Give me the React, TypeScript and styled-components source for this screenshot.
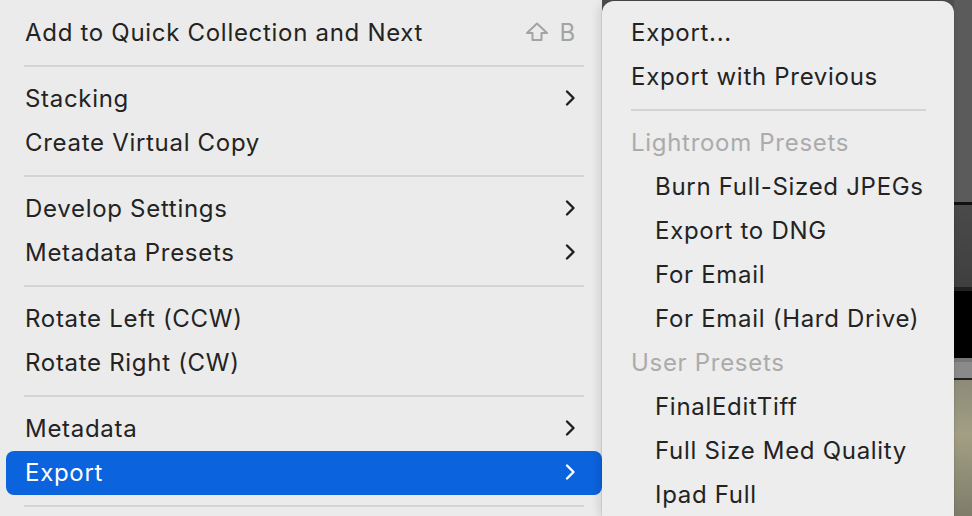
import React from 'react';
import styled, { createGlobalStyle } from 'styled-components';

const Global = createGlobalStyle`
  html, body {
    margin: 0;
    padding: 0;
    width: 972px;
    height: 516px;
    overflow: hidden;
    background: #4f4f4f;
  }
  body {
    font-family: Inter, "Noto Sans", "Liberation Sans", sans-serif;
    -webkit-font-smoothing: antialiased;
  }
`;

const Page = styled.div`
  display: flex;
  width: 972px;
  height: 516px;
  overflow: hidden;
`;

const MainMenu = styled.div`
  width: 602px;
  flex: none;
  background: #ebebeb;
  padding: 11px 0 0 6px;
  box-sizing: border-box;
  display: flex;
  flex-direction: column;
`;

const SubMenu = styled.div`
  width: 352px;
  flex: none;
  background: #ededed;
  border-radius: 12px 12px 0 0;
  margin-top: 1px;
  padding: 10px 0 0 0;
  box-sizing: border-box;
  display: flex;
  flex-direction: column;
  position: relative;
  z-index: 1;
  box-shadow: -3px 0 10px rgba(0, 0, 0, 0.12), 0 0 0 0.5px rgba(0, 0, 0, 0.12);
`;

const Row = styled.div<{ $active?: boolean; $indent?: number }>`
  height: 44px;
  flex: none;
  display: flex;
  align-items: center;
  box-sizing: border-box;
  padding: 0 26px 2px ${(p) => 19 + (p.$indent || 0)}px;
  border-radius: 8px;
  font-size: 24px;
  letter-spacing: 0.7px;
  color: ${(p) => (p.$active ? '#ffffff' : '#232323')};
  background: ${(p) => (p.$active ? '#0b63de' : 'transparent')};
  white-space: nowrap;
`;

const SubRow = styled(Row)`
  padding-left: ${(p) => 29 + (p.$indent || 0)}px;
`;

const Header = styled(SubRow)`
  color: #ababab;
`;

const Label = styled.span`
  flex: 1;
`;

const Shortcut = styled.span`
  display: flex;
  align-items: center;
  gap: 11px;
  color: #a3a3a3;
  font-size: 24px;
  margin-right: 0;
`;

const Separator = styled.div<{ $left: number; $right: number }>`
  height: 22px;
  flex: none;
  display: flex;
  align-items: center;
  padding: 0 ${(p) => p.$right}px 0 ${(p) => p.$left}px;
  &::after {
    content: '';
    flex: 1;
    height: 2px;
    background: #d4d4d4;
  }
`;

const Backdrop = styled.div`
  flex: 1;
  display: flex;
  flex-direction: column;
`;

const Band = styled.div<{ $h: number; $bg: string }>`
  height: ${(p) => p.$h}px;
  flex: none;
  background: ${(p) => p.$bg};
`;

const Photo = styled.div`
  flex: 1;
  background: linear-gradient(180deg, #8d8a78 0%, #a29f84 40%, #7f7c6a 100%);
`;

function Chevron({ color }: { color: string }) {
  return (
    <svg width="12" height="18" viewBox="0 0 12 18">
      <path d="M3 2.5 L9.5 9 L3 15.5" fill="none" stroke={color} strokeWidth="2.4" strokeLinecap="round" strokeLinejoin="round" />
    </svg>
  );
}

function ShiftIcon() {
  return (
    <svg width="24" height="20" viewBox="0 0 24 20">
      <path d="M12 1.5 L22 11 L16.5 11 L16.5 18 L7.5 18 L7.5 11 L2 11 Z" fill="none" stroke="#a3a3a3" strokeWidth="2" strokeLinejoin="round" />
    </svg>
  );
}

type Item = { label?: string; sub?: boolean; active?: boolean; sep?: boolean; shortcut?: boolean };

const mainItems: Item[] = [
  { label: 'Add to Quick Collection and Next', shortcut: true },
  { sep: true },
  { label: 'Stacking', sub: true },
  { label: 'Create Virtual Copy' },
  { sep: true },
  { label: 'Develop Settings', sub: true },
  { label: 'Metadata Presets', sub: true },
  { sep: true },
  { label: 'Rotate Left (CCW)' },
  { label: 'Rotate Right (CW)' },
  { sep: true },
  { label: 'Metadata', sub: true },
  { label: 'Export', sub: true, active: true },
  { sep: true },
];

type SubItem = { label?: string; header?: boolean; indent?: boolean; sep?: boolean };

const subItems: SubItem[] = [
  { label: 'Export...' },
  { label: 'Export with Previous' },
  { sep: true },
  { label: 'Lightroom Presets', header: true },
  { label: 'Burn Full-Sized JPEGs', indent: true },
  { label: 'Export to DNG', indent: true },
  { label: 'For Email', indent: true },
  { label: 'For Email (Hard Drive)', indent: true },
  { label: 'User Presets', header: true },
  { label: 'FinalEditTiff', indent: true },
  { label: 'Full Size Med Quality', indent: true },
  { label: 'Ipad Full', indent: true },
];

export default function App() {
  return (
    <>
      <Global />
      <Page>
        <MainMenu>
          {mainItems.map((it, i) =>
            it.sep ? (
              <Separator key={i} $left={18} $right={18} />
            ) : (
              <Row key={i} $active={it.active}>
                <Label>{it.label}</Label>
                {it.shortcut && (
                  <Shortcut>
                    <ShiftIcon />
                    B
                  </Shortcut>
                )}
                {it.sub && <Chevron color={it.active ? '#ffffff' : '#1f1f1f'} />}
              </Row>
            )
          )}
        </MainMenu>
        <SubMenu>
          {subItems.map((it, i) =>
            it.sep ? (
              <Separator key={i} $left={29} $right={28} />
            ) : it.header ? (
              <Header key={i}>{it.label}</Header>
            ) : (
              <SubRow key={i} $indent={it.indent ? 24 : 0}>
                {it.label}
              </SubRow>
            )
          )}
        </SubMenu>
        <Backdrop>
          <Band $h={202} $bg="#5b5b5b" />
          <Band $h={3} $bg="#111" />
          <Band $h={82} $bg="linear-gradient(180deg,#4a4a4a,#3f3f3f)" />
          <Band $h={4} $bg="#222" />
          <Band $h={67} $bg="#000" />
          <Band $h={4} $bg="#777" />
          <Band $h={16} $bg="#8a8a8a" />
          <Band $h={2} $bg="#222" />
          <Photo />
        </Backdrop>
      </Page>
    </>
  );
}
